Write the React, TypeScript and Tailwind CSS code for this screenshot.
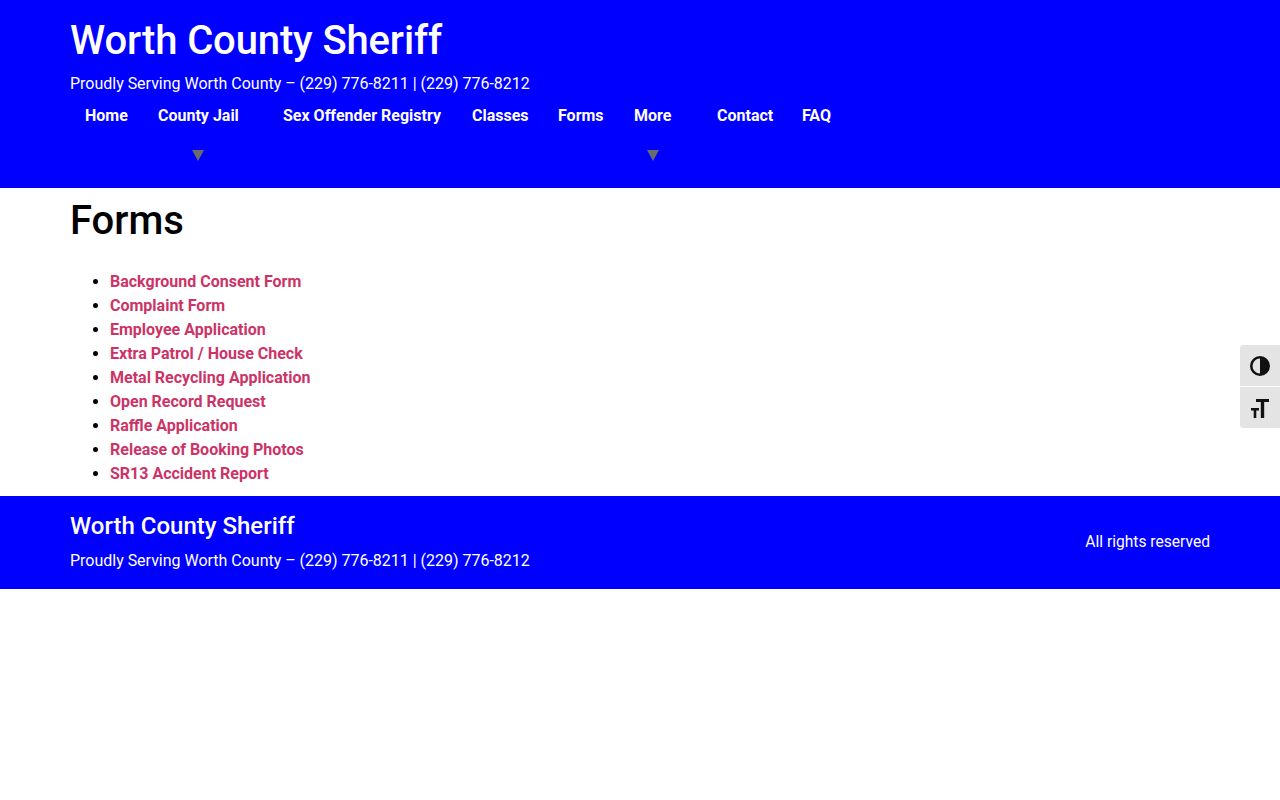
const navItems = [
  { name: "Home", width: "w-[73px]" },
  { name: "County Jail", width: "w-[125px]", caret: true },
  { name: "Sex Offender Registry", width: "w-[189px]" },
  { name: "Classes", width: "w-[86px]" },
  { name: "Forms", width: "w-[76px]" },
  { name: "More", width: "w-[83px]", caret: true },
  { name: "Contact", width: "w-[85px]" },
  { name: "FAQ", width: "w-[60px]" },
];

const forms = [
  "Background Consent Form",
  "Complaint Form",
  "Employee Application",
  "Extra Patrol / House Check",
  "Metal Recycling Application",
  "Open Record Request",
  "Raffle Application",
  "Release of Booking Photos",
  "SR13 Accident Report",
];

export default function App() {
  return (
    <div className="min-h-[800px] bg-white font-['Roboto',sans-serif] text-base text-black">
      {/* Header */}
      <header className="h-[188px] bg-[#0000ff] px-[70px] text-white">
        <div className="flex h-[72px] items-center pt-[10px] text-[40px] font-medium leading-[48px] tracking-[-0.13px]">
          Worth County Sheriff
        </div>
        <p className="h-[24px] leading-[24px] tracking-[-0.015px]">
          Proudly Serving Worth County – (229) 776-8211 | (229) 776-8212
        </p>
        <nav className="mt-[8px] flex items-start">
          {navItems.map((item) => (
            <a key={item.name} href="#" className={`px-[15px] font-bold leading-[24px] ${item.width}`}>
              <span className="flex w-fit flex-col items-center">
                <span className="whitespace-nowrap">{item.name}</span>
                {item.caret && (
                  <span className="mt-[22px] h-0 w-0 border-x-[6px] border-t-[11px] border-x-transparent border-t-[#6b6b6b]" />
                )}
              </span>
            </a>
          ))}
        </nav>
      </header>

      {/* Content */}
      <main className="px-[70px]">
        <h1 className="pt-[9px] text-[40px] font-medium leading-[48px]">Forms</h1>
        <ul className="mt-[25px] list-disc pl-[40px] leading-[24px]">
          {forms.map((form) => (
            <li key={form}>
              <a href="#" className="font-bold text-[#cc3366]">
                {form}
              </a>
            </li>
          ))}
        </ul>
      </main>

      {/* Footer */}
      <footer className="mt-[10px] flex h-[93px] items-center justify-between bg-[#0000ff] px-[70px] text-white">
        <div>
          <div className="text-[24px] font-medium leading-[29px]">Worth County Sheriff</div>
          <p className="mt-[8px] leading-[24px] tracking-[-0.015px]">
            Proudly Serving Worth County – (229) 776-8211 | (229) 776-8212
          </p>
        </div>
        <div className="text-[15.6px]">All rights reserved</div>
      </footer>

      {/* Accessibility toolbar */}
      <div className="fixed right-0 top-[345px] flex w-[40px] flex-col gap-[1px]">
        <button className="flex h-[41px] items-center justify-center rounded-tl-[3px] bg-[#e4e4e4]">
          <svg viewBox="0 0 20 20" className="h-[20px] w-[20px]">
            <circle cx="10" cy="10" r="8.75" fill="none" stroke="#111111" strokeWidth="2.5" />
            <path d="M10 1a9 9 0 0 1 0 18z" fill="#111111" />
          </svg>
        </button>
        <button className="flex h-[41px] items-center justify-center rounded-bl-[3px] bg-[#e4e4e4]">
          <svg viewBox="0 0 18 19" className="mt-[1px] h-[19px] w-[18px]" fill="#111111">
            <path d="M5 0h13v3h-4.800v16h-3.400V3H5z" />
            <path d="M0 9h8v2.400H5.300V19H2.700v-7.600H0z" />
          </svg>
        </button>
      </div>
    </div>
  );
}
